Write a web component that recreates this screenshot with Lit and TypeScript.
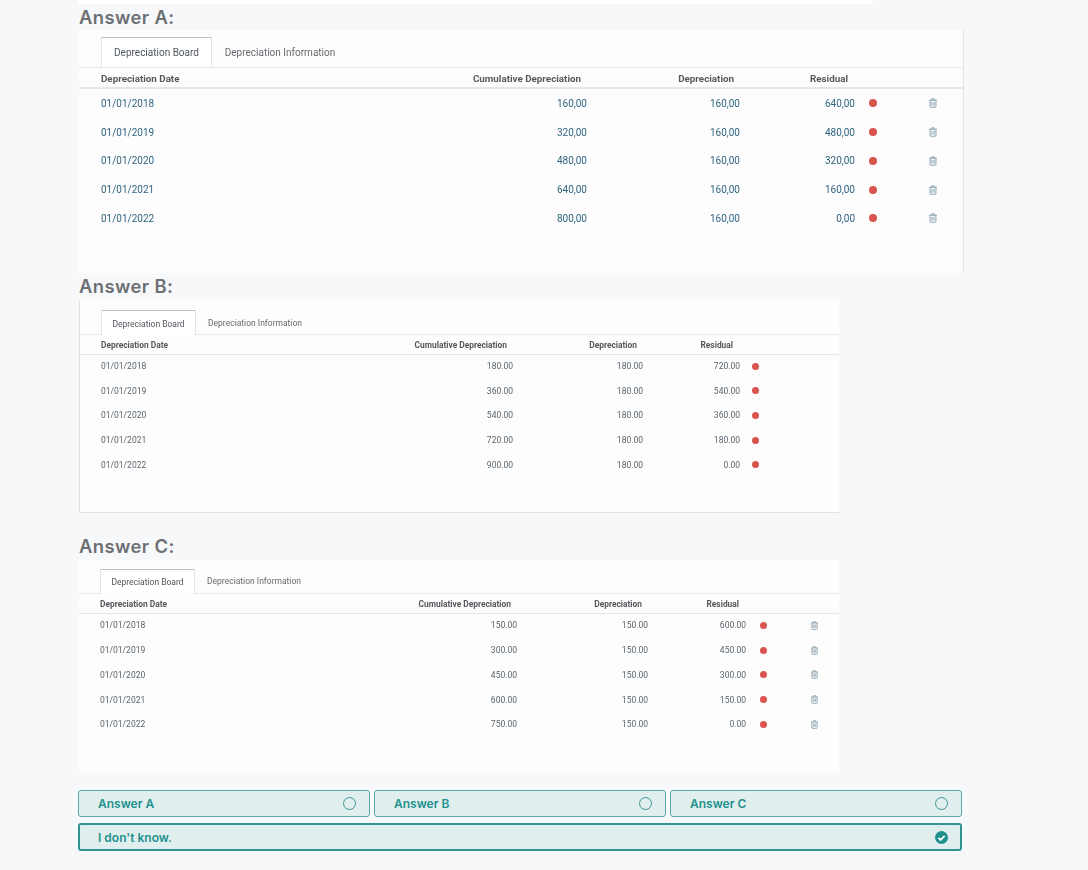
import { LitElement, html, css, svg, nothing } from "lit";
import { customElement, property } from "lit/decorators.js";

interface BoardRow {
    date: string;
    cumulative: string;
    depreciation: string;
    residual: string;
}

const trashIcon = svg`<path d="M1.4 2.7h9.2M4.2 2.5V1.1h3.6v1.4" fill="none" stroke="currentColor" stroke-width="1.1"/><path d="M2.5 2.9v7.3c0 .6.3.9.9.9h5.2c.6 0 .9-.3.9-.9V2.9" fill="none" stroke="currentColor" stroke-width="1.1"/><path d="M4.5 4.6v4.6M6 4.6v4.6M7.5 4.6v4.6" fill="none" stroke="currentColor" stroke-width=".8"/>`;

@customElement("depreciation-board")
export class DepreciationBoard extends LitElement {

    static styles = css`
        :host {
            display: block;
            font-family: Roboto, "Liberation Sans", sans-serif;
        }
        .card {
            background: #fdfdfd;
            box-sizing: border-box;
            margin-left: 1px;
            filter: blur(0.35px);
        }
        .tabs {
            border-bottom: 1px solid #e9e9ea;
            box-sizing: border-box;
            display: flex;
        }
        .tab {
            box-sizing: border-box;
            color: #666b70;
            text-align: center;
            white-space: nowrap;
        }
        .tab.active {
            background: #fff;
            border: 1px solid #e6e3e3;
            border-top-color: #c8bdbd;
            border-bottom: none;
            color: #50575d;
        }
        .row {
            align-items: center;
            box-sizing: border-box;
            display: grid;
            white-space: nowrap;
        }
        .head {
            border-bottom: 1px solid #e6e6e7;
            color: #55595d;
            font-weight: 700;
            padding-top: 1px;
        }
        .num {
            text-align: right;
        }
        .head .num {
            padding-right: 6px;
        }
        .head .num:last-child {
            padding-right: 7px;
        }
        .dot {
            background: #d9534f;
            border-radius: 50%;
            display: block;
        }
        .trash {
            display: block;
            justify-self: center;
        }

        .a {
            border-right: 1px solid #e2e3e4;
            font-size: 10px;
            height: 243px;
            padding-top: 7px;
            width: 885px;
        }
        .a .tabs {
            height: 31px;
            padding-left: 22px;
        }
        .a .tab {
            line-height: 31px;
            width: 136px;
        }
        .a .tab.active {
            height: 30px;
            line-height: 30px;
            width: 111px;
        }
        .a .row {
            grid-template-columns: 299px 187px 153px 115px 48px 60px;
            padding-left: 22px;
        }
        .a .head {
            border-bottom-width: 2px;
            font-size: 9.8px;
            height: 21px;
        }
        .a .body {
            color: #2f6580;
            height: 28.75px;
        }
        .a .dot {
            height: 8px;
            margin-left: 14px;
            width: 8px;
        }
        .a .trash {
            color: #7d9bab;
            height: 10px;
            width: 10px;
        }

        .b, .c {
            font-size: 8.5px;
            height: 213px;
            width: 760px;
        }
        .b {
            border-bottom: 1px solid #e8e2e4;
            border-left: 1px solid #e1e2e3;
            padding-top: 10px;
        }
        .c {
            height: 212px;
            padding-top: 9px;
        }
        .b .tabs, .c .tabs {
            height: 25px;
            padding-left: 21px;
        }
        .b .tab {
            line-height: 26px;
            width: 118px;
        }
        .c .tab {
            line-height: 25px;
            width: 118px;
        }
        .b .tab.active, .c .tab.active {
            height: 25px;
            width: 95px;
        }
        .b .row {
            grid-template-columns: 239px 173px 130px 97px 30px;
            padding-left: 21px;
        }
        .c .row {
            grid-template-columns: 250px 167px 131px 98px 44px 49px;
            padding-left: 21px;
        }
        .b .head, .c .head {
            font-size: 8.4px;
            height: 20px;
            margin-bottom: -1px;
        }
        .b .body, .c .body {
            color: #59646d;
            height: 24.6px;
        }
        .c .body {
            height: 24.75px;
        }
        .b .dot, .c .dot {
            height: 7px;
            width: 7px;
        }
        .b .dot {
            margin-left: 12px;
        }
        .c .dot {
            margin-left: 13.5px;
        }
        .c .trash {
            color: #8097a5;
            height: 9px;
            width: 9px;
        }
    `;

    @property() variant: string = "a";
    @property({ type: Array }) rows: BoardRow[] = [];
    @property({ type: Boolean }) deletable: boolean = false;

    render() {
        return html`
            <div class="card ${this.variant}">
                <div class="tabs">
                    <div class="tab active">Depreciation Board</div>
                    <div class="tab">Depreciation Information</div>
                </div>
                <div class="row head">
                    <span>Depreciation Date</span>
                    <span class="num">Cumulative Depreciation</span>
                    <span class="num">Depreciation</span>
                    <span class="num">Residual</span>
                </div>
                ${this.rows.map((row) => html`
                    <div class="row body">
                        <span>${row.date}</span>
                        <span class="num">${row.cumulative}</span>
                        <span class="num">${row.depreciation}</span>
                        <span class="num">${row.residual}</span>
                        <span class="dot"></span>
                        ${this.deletable ? html`<svg class="trash" viewBox="0 0 12 12">${trashIcon}</svg>` : nothing}
                    </div>
                `)}
            </div>
        `;
    }
}

function buildRows(step: number, comma: boolean): BoardRow[] {
    const fmt = (n: number) => {
        const text = n.toFixed(2);
        return comma ? text.replace(".", ",") : text;
    };
    return [0, 1, 2, 3, 4].map((i) => ({
        date: "01/01/" + (2018 + i),
        cumulative: fmt(step * (i + 1)),
        depreciation: fmt(step),
        residual: fmt(step * (4 - i)),
    }));
}

@customElement("app-root")
export class AppRoot extends LitElement {

    static styles = css`
        :host {
            background: #f7f8fa;
            display: block;
            font-family: Inter, "Liberation Sans", sans-serif;
            height: 870px;
            overflow: hidden;
        }
        .page {
            padding-left: 78px;
            width: 884px;
        }
        .top-bar {
            background: #fff;
            height: 4px;
            width: 795px;
        }
        h2 {
            color: #6c7074;
            font-size: 18.4px;
            font-weight: 600;
            height: 26px;
            letter-spacing: 0.4px;
            line-height: 26px;
            margin: 0 0 0 1px;
        }
        .gap-b {
            line-height: 25px;
            margin-top: 1px;
        }
        .gap-c {
            line-height: 24px;
            margin-top: 21px;
        }
        .options {
            display: grid;
            gap: 6px 4px;
            grid-template-columns: repeat(3, 1fr);
            margin-top: 18px;
        }
        .option {
            align-items: center;
            background: #e0eeee;
            border: 1px solid #5aa7a7;
            border-radius: 3px;
            box-sizing: border-box;
            color: #1f918f;
            display: flex;
            font-size: 12px;
            font-weight: 600;
            height: 27px;
            justify-content: space-between;
            padding: 0 13px 0 19px;
        }
        .option.selected {
            border: 2px solid #2f9493;
            grid-column: 1 / -1;
            height: 28px;
            padding: 0 12px 0 18px;
        }
        .radio {
            border: 1.5px solid #3d9796;
            border-radius: 50%;
            box-sizing: border-box;
            height: 13px;
            width: 13px;
        }
        .check {
            display: block;
            height: 13px;
            width: 13px;
        }
    `;

    render() {
        return html`
            <div class="page">
                <div class="top-bar"></div>
                <h2>Answer A:</h2>
                <depreciation-board variant="a" deletable .rows=${buildRows(160, true)}></depreciation-board>
                <h2 class="gap-b">Answer B:</h2>
                <depreciation-board variant="b" .rows=${buildRows(180, false)}></depreciation-board>
                <h2 class="gap-c">Answer C:</h2>
                <depreciation-board variant="c" deletable .rows=${buildRows(150, false)}></depreciation-board>
                <div class="options">
                    ${["Answer A", "Answer B", "Answer C"].map((label) => html`
                        <div class="option"><span>${label}</span><span class="radio"></span></div>
                    `)}
                    <div class="option selected">
                        <span>I don't know.</span>
                        <svg class="check" viewBox="0 0 13 13">
                            <circle cx="6.5" cy="6.5" r="6.5" fill="#1f8f8d"/>
                            <path d="M3.4 6.8l2.2 2.2 4-4.2" fill="none" stroke="#fff" stroke-width="1.9"/>
                        </svg>
                    </div>
                </div>
            </div>
        `;
    }
}
